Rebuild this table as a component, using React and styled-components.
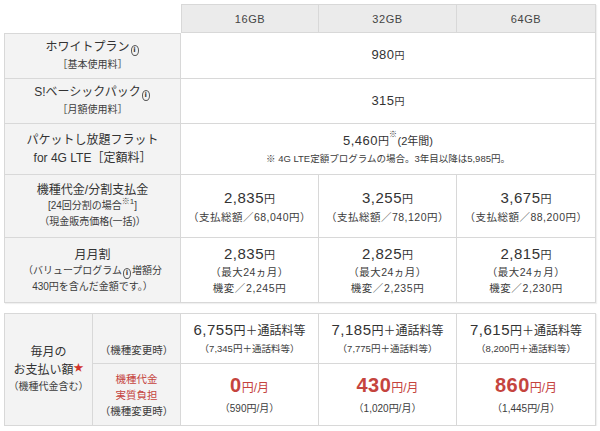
import React from 'react';
import styled, { createGlobalStyle } from 'styled-components';

const GlobalStyle = createGlobalStyle`
    html, body {
        margin: 0;
        padding: 0;
        background: #fff;
    }
    body {
        font-family: "Liberation Sans", "Noto Sans CJK JP", sans-serif;
        color: #333;
    }
    * {
        box-sizing: border-box;
    }
`;

const LINE = '#d8d8d8';

const Page = styled.div`
    padding: 4px 0 0 4px;
    width: 596px;
    display: flex;
    flex-direction: column;
    gap: 10px;
`;

const Grid = styled.div`
    display: grid;
    grid-template-columns: ${(p) => p.$cols};
    grid-template-rows: ${(p) => p.$rows};
    box-shadow: 1px 1px 1px rgba(0, 0, 0, 0.06);
`;

const Corner = styled.div``;

const Cell = styled.div`
    display: flex;
    flex-direction: column;
    align-items: center;
    justify-content: ${(p) => (p.$bottom ? 'flex-end' : 'center')};
    padding-bottom: ${(p) => (p.$bottom ? '5px' : '0')};
    text-align: center;
    border-right: 1px solid ${LINE};
    border-bottom: 1px solid ${LINE};
    border-top: ${(p) => (p.$top ? `1px solid ${LINE}` : 'none')};
    border-left: ${(p) => (p.$left ? `1px solid ${LINE}` : 'none')};
    background: ${(p) => p.$bg || '#fff'};
    grid-column: span ${(p) => p.$span || 1};
    grid-row: span ${(p) => p.$rspan || 1};
`;

const HeadCell = styled(Cell)`
    background: #ebebeb;
    color: #444;
    font-size: 11px;
    letter-spacing: 0.6px;
`;

const Label = styled.div`
    font-size: 12px;
    line-height: ${(p) => p.$lh || '18px'};
    color: #333;
    white-space: nowrap;
`;

const Sub = styled.div`
    font-size: ${(p) => p.$size || '10px'};
    line-height: ${(p) => p.$lh || '16px'};
    color: ${(p) => (p.$red ? '#c5443e' : '#3c3c3c')};
    white-space: nowrap;
    letter-spacing: ${(p) => p.$ls || '0'};
`;

const Price = styled.div`
    font-size: ${(p) => p.$size || '15px'};
    line-height: ${(p) => p.$lh || '20px'};
    font-weight: ${(p) => (p.$bold ? 700 : 400)};
    color: ${(p) => (p.$red ? '#c5443e' : '#333')};
    white-space: nowrap;
    letter-spacing: 0.5px;
`;

const Yen = styled.span`
    font-size: ${(p) => p.$size || '11px'};
    font-weight: 400;
    letter-spacing: 0;
`;

const Mark = styled.sup`
    font-size: 8px;
    vertical-align: top;
    line-height: 1;
`;

const Star = styled.span`
    color: #d0342c;
    font-size: 10px;
    vertical-align: 3px;
`;

const Info = styled.span`
    display: inline-flex;
    align-items: center;
    justify-content: center;
    width: 8px;
    height: 11px;
    margin: 0 1px;
    border: 1px solid #555;
    border-radius: 50%;
    font-family: "DejaVu Sans", sans-serif;
    font-size: 7px;
    font-weight: 700;
    line-height: 1;
    vertical-align: -1px;
    color: #333;
`;

const LABEL_BG = '#f3f3f3';

const monthly = [
    { price: '2,835', sub: '機変／2,245円' },
    { price: '2,825', sub: '機変／2,235円' },
    { price: '2,815', sub: '機変／2,230円' },
];

const device = [
    { price: '2,835', total: '68,040' },
    { price: '3,255', total: '78,120' },
    { price: '3,675', total: '88,200' },
];

const payment = [
    { total: '6,755', before: '7,345', real: '0', realBefore: '590' },
    { total: '7,185', before: '7,775', real: '430', realBefore: '1,020' },
    { total: '7,615', before: '8,200', real: '860', realBefore: '1,445' },
];

export default function App() {
    return (
        <>
            <GlobalStyle />
            <Page>
                <Grid $cols="177px 138px 138px 139px" $rows="29px 46px 45px 51px 63px 65px">
                    <Corner />
                    <HeadCell $top $left>16GB</HeadCell>
                    <HeadCell $top>32GB</HeadCell>
                    <HeadCell $top>64GB</HeadCell>

                    <Cell $left $top $bg={LABEL_BG}>
                        <Label>ホワイトプラン<Info>i</Info></Label>
                        <Sub $lh="18px">［基本使用料］</Sub>
                    </Cell>
                    <Cell $span={3}>
                        <Price $size="13px">980<Yen $size="10px">円</Yen></Price>
                    </Cell>

                    <Cell $left $bg={LABEL_BG}>
                        <Label>S!ベーシックパック<Info>i</Info></Label>
                        <Sub $lh="18px">［月額使用料］</Sub>
                    </Cell>
                    <Cell $span={3}>
                        <Price $size="13px">315<Yen $size="10px">円</Yen></Price>
                    </Cell>

                    <Cell $left $bg={LABEL_BG}>
                        <Label>パケットし放題フラット</Label>
                        <Label>for 4G LTE［定額料］</Label>
                    </Cell>
                    <Cell $span={3}>
                        <Price $size="13px">
                            5,460<Yen $size="11px">円</Yen><Mark>※</Mark>
                            <Yen $size="11px">(2年間)</Yen>
                        </Price>
                        <Sub $size="9.5px">※ 4G LTE定額プログラムの場合。3年目以降は5,985円。</Sub>
                    </Cell>

                    <Cell $left $bg={LABEL_BG}>
                        <Label $lh="16px">機種代金/分割支払金</Label>
                        <Sub>[24回分割の場合<Mark>※1</Mark>]</Sub>
                        <Sub>（現金販売価格(一括)）</Sub>
                    </Cell>
                    {device.map((d) => (
                        <Cell key={d.price}>
                            <Price>{d.price}<Yen>円</Yen></Price>
                            <Sub $size="10.5px" $ls="0.5px">（支払総額／{d.total}円）</Sub>
                        </Cell>
                    ))}

                    <Cell $left $bg={LABEL_BG}>
                        <Label $lh="16px">月月割</Label>
                        <Sub $lh="15px">（バリュープログラム<Info>i</Info>増額分</Sub>
                        <Sub $lh="15px">430円を含んだ金額です。）</Sub>
                    </Cell>
                    {monthly.map((m) => (
                        <Cell key={m.price}>
                            <Price $lh="18px">{m.price}<Yen>円</Yen></Price>
                            <Sub $size="10.5px" $ls="0.5px">（最大24ヵ月）</Sub>
                            <Sub $size="10.5px" $ls="0.6px">{m.sub}</Sub>
                        </Cell>
                    ))}
                </Grid>

                <Grid $cols="89px 88px 138px 138px 139px" $rows="51px 62px">
                    <Cell $top $left $rspan={2} $bg={LABEL_BG}>
                        <Label $lh="16px">毎月の</Label>
                        <Label $lh="16px">お支払い額<Star>★</Star></Label>
                        <Sub $lh="17px">（機種代金含む）</Sub>
                    </Cell>
                    <Cell $top $bottom $bg={LABEL_BG}>
                        <Sub $size="10.5px">（機種変更時）</Sub>
                    </Cell>
                    {payment.map((p) => (
                        <Cell $top key={p.total}>
                            <Price>{p.total}<Yen $size="12px">円＋通話料等</Yen></Price>
                            <Sub $size="9.5px">（{p.before}円＋通話料等）</Sub>
                        </Cell>
                    ))}

                    <Cell $bg={LABEL_BG}>
                        <Sub $red $size="10.5px" $lh="16px">機種代金</Sub>
                        <Sub $red $size="10.5px" $lh="16px">実質負担</Sub>
                        <Sub $size="10.5px" $lh="16px">（機種変更時）</Sub>
                    </Cell>
                    {payment.map((p) => (
                        <Cell key={p.real}>
                            <Price $red $bold $size="20px" $lh="26px">
                                {p.real}<Yen $size="12px">円/月</Yen>
                            </Price>
                            <Sub>（{p.realBefore}円/月）</Sub>
                        </Cell>
                    ))}
                </Grid>
            </Page>
        </>
    );
}
